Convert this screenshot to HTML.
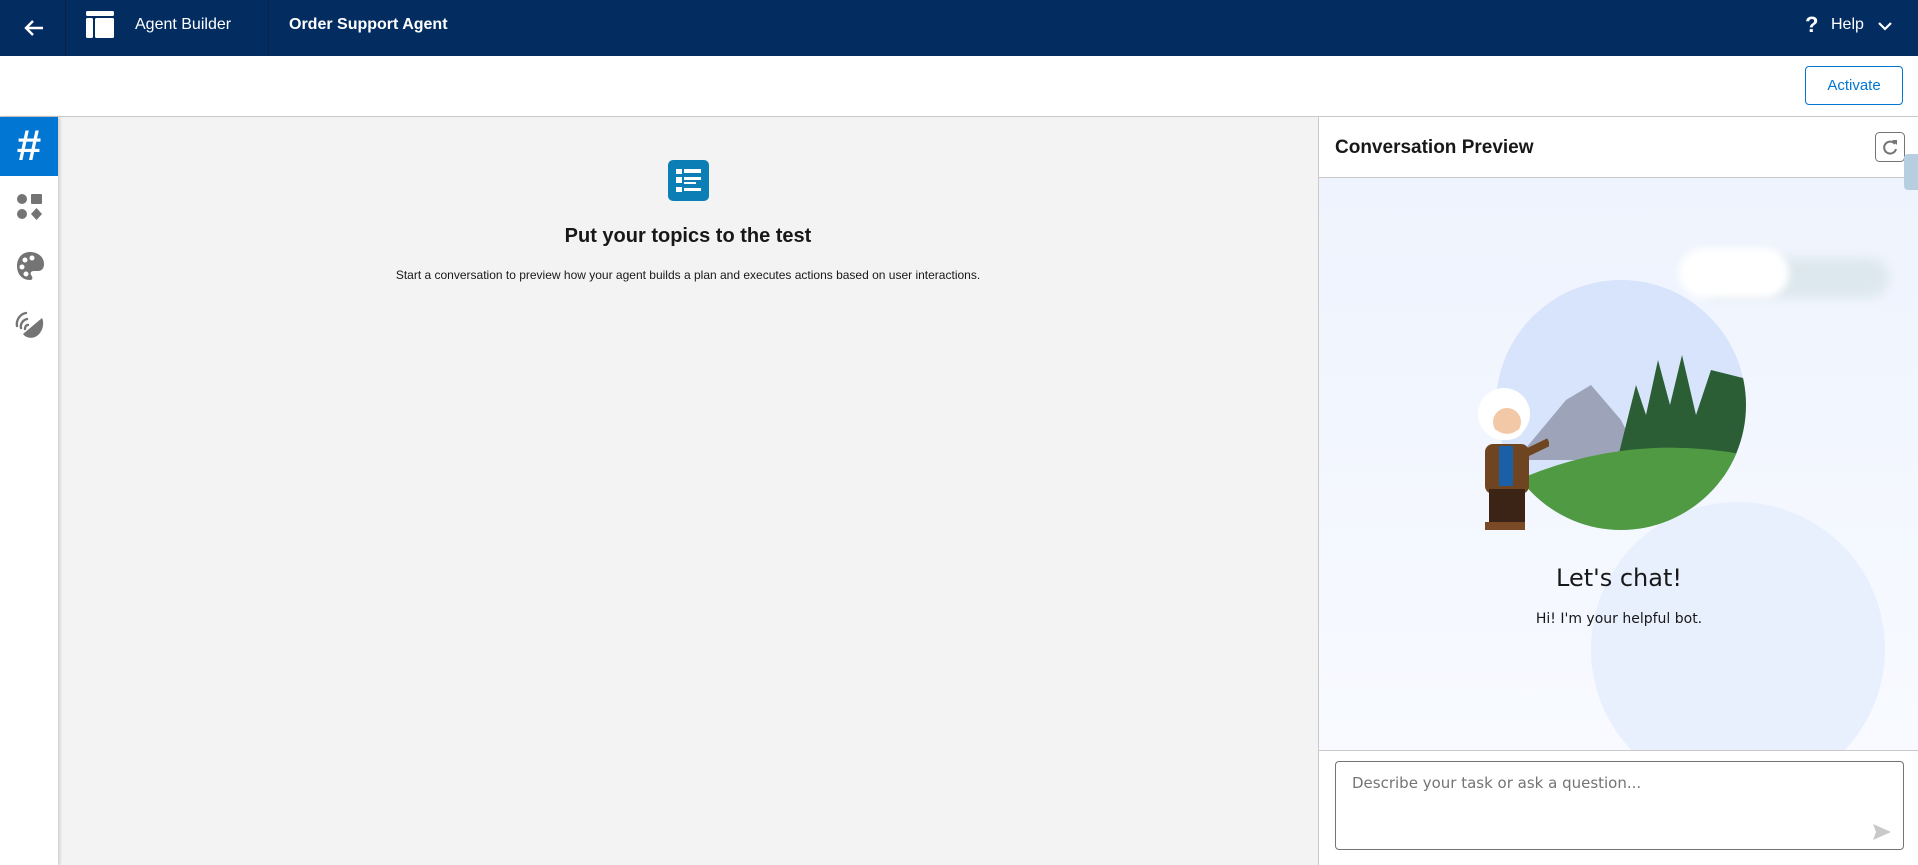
<!DOCTYPE html>
<html><head><meta charset="utf-8"><style>
*{box-sizing:border-box;margin:0;padding:0}
body{width:1918px;height:865px;overflow:hidden;font-family:"Liberation Sans",sans-serif;background:#f3f3f3;position:relative}
.hdr{position:absolute;left:0;top:0;width:1918px;height:56px;background:#032d60;color:#fff}
.div{position:absolute;top:0;width:1px;height:56px;background:#0b2246}
.bar{position:absolute;left:0;top:56px;width:1918px;height:61px;background:#fff;border-bottom:1px solid #c9c9c9}
.btn{position:absolute;left:1805px;top:66px;width:98px;height:39px;border:1px solid #0176d3;border-radius:4px;color:#0176d3;font-size:15px;text-align:center;line-height:37px;background:#fff}
.side{position:absolute;left:0;top:117px;width:58px;height:748px;background:#fff;box-shadow:2px 0 3px rgba(0,0,0,.15)}
.panel{position:absolute;left:1318px;top:117px;width:600px;height:748px;background:#fff;border-left:1px solid #c9c9c9}
.chat{position:absolute;left:0;top:60px;width:600px;height:573px;background:linear-gradient(#eef3fd,#f5f8ff 70%,#f8faff);overflow:hidden;border-top:1px solid #c9c9c9}
</style></head><body>
<div class="hdr">
 <svg style="position:absolute;left:23px;top:17px" width="22" height="22" viewBox="0 0 22 22"><path d="M20 11H4M10 4l-7 7 7 7" stroke="#fff" stroke-width="2.4" fill="none"/></svg>
 <div class="div" style="left:65px"></div>
 <svg style="position:absolute;left:86px;top:11px" width="28" height="27" viewBox="0 0 28 27"><rect x="0" y="0" width="28" height="5" rx="1.5" fill="#fff"/><rect x="0" y="7" width="7" height="20" rx="1.5" fill="#fff"/><rect x="9" y="7" width="19" height="20" rx="1.5" fill="#fff"/></svg>
 <div style="position:absolute;left:135px;top:16px;font-size:16px">Agent Builder</div>
 <div class="div" style="left:268px"></div>
 <div style="position:absolute;left:289px;top:16px;font-size:16px;font-weight:bold">Order Support Agent</div>
 <div style="position:absolute;left:1805px;top:12px;font-size:22px;font-weight:bold">?</div>
 <div style="position:absolute;left:1831px;top:16px;font-size:16px">Help</div>
 <svg style="position:absolute;left:1877px;top:20px" width="16" height="12" viewBox="0 0 16 12"><path d="M2 3l6 6 6-6" stroke="#fff" stroke-width="2.2" fill="none"/></svg>
</div>
<div class="bar"><div class="btn" style="top:10px">Activate</div></div>
<div class="side">
 <div style="position:absolute;left:0;top:0;width:58px;height:59px;background:#0176d3;color:#fff;font-size:44px;font-weight:bold;text-align:center;line-height:58px">#</div>
 <svg style="position:absolute;left:16px;top:76px" width="28" height="28" viewBox="0 0 28 28" fill="#747474"><circle cx="6" cy="6" r="5"/><rect x="15" y="1" width="11" height="10" rx="1"/><circle cx="6" cy="21" r="5"/><path d="M20.5 15l5.5 6-5.5 6-5.5-6z"/></svg>
 <svg style="position:absolute;left:16px;top:134px" width="28" height="30" viewBox="0 0 28 30"><path d="M14 1C6 1 1 7 1 15s5 14 13 14c3 0 3-3 1-5-1-2 0-4 3-4h4c4 0 6-3 6-7C28 6 22 1 14 1z" fill="#747474"/><circle cx="9" cy="9" r="2.5" fill="#fff"/><circle cx="16" cy="7" r="2.5" fill="#fff"/><circle cx="6" cy="16" r="2.5" fill="#fff"/><circle cx="10" cy="23" r="2.5" fill="#fff"/></svg>
 <svg style="position:absolute;left:14px;top:193px" width="30" height="30" viewBox="0 0 30 30"><path d="M28 8c3 6 0 16-7 19-5 2-10 0-12-3z" fill="#747474"/><path d="M3 16C2 10 6 4 12 3M7 18c-1-4 2-8 6-9M11 19c0-2 1-4 3-4" stroke="#747474" stroke-width="2.4" fill="none" stroke-linecap="round"/></svg>
</div>
<svg style="position:absolute;left:668px;top:160px" width="41" height="41" viewBox="0 0 41 41"><rect width="41" height="41" rx="5" fill="#0b7fb5"/><rect x="8" y="9" width="6" height="5" fill="#fff"/><rect x="16" y="9" width="17" height="4" fill="#fff"/><rect x="8" y="17" width="6" height="6" fill="#fff"/><rect x="16" y="17" width="17" height="3" fill="#fff"/><rect x="16" y="22" width="12" height="2" fill="#fff"/><rect x="8" y="27" width="6" height="5" fill="#fff"/><rect x="16" y="28" width="17" height="3" fill="#fff"/></svg>
<div style="position:absolute;left:58px;width:1260px;top:225px;text-align:center;font-size:20px;font-weight:bold;color:#181818">Put your topics to the test</div>
<div style="position:absolute;left:58px;width:1260px;top:268px;text-align:center;font-size:12px;color:#181818">Start a conversation to preview how your agent builds a plan and executes actions based on user interactions.</div>
<div class="panel">
 <div style="position:absolute;left:16px;top:20px;font-size:19px;font-weight:bold;color:#181818">Conversation Preview</div>
 <svg style="position:absolute;left:556px;top:15px" width="30" height="30" viewBox="0 0 30 30"><rect x=".5" y=".5" width="29" height="29" rx="4" fill="#fff" stroke="#747474"/><path d="M20 12a6 6 0 1 0 1 5" stroke="#747474" stroke-width="2" fill="none"/><path d="M17 8h5v5z" fill="#747474"/></svg>
 <div class="chat">
  <div style="position:absolute;left:272px;top:324px;width:294px;height:294px;border-radius:50%;background:#e8effd"></div>
  <div style="position:absolute;left:380px;top:80px;width:190px;height:40px;border-radius:30px;background:#dde8ee;filter:blur(5px)"></div>
  <div style="position:absolute;left:360px;top:70px;width:110px;height:50px;border-radius:30px;background:#fff;filter:blur(4px)"></div>
  <svg style="position:absolute;left:177px;top:102px" width="250" height="250" viewBox="0 0 250 250"><defs><clipPath id="c"><circle cx="125" cy="125" r="125"/></clipPath></defs><g clip-path="url(#c)"><rect width="250" height="250" fill="#d8e4fb"/><path d="M20 180L70 120 95 105 125 140 145 180z" fill="#9da3b8"/><path d="M120 185l20-80 10 30 12-55 12 45 12-50 14 60 15-45 40 10v100z" fill="#2c5e35"/><path d="M0 210Q120 150 250 175V250H0z" fill="#4f9a42"/></g></svg>
  <svg style="position:absolute;left:150px;top:206px" width="80" height="152" viewBox="0 0 80 152"><circle cx="35" cy="30" r="26" fill="#fff"/><circle cx="38" cy="38" r="14" fill="#f3c8a7"/><path d="M25 48q13 10 26 0" stroke="#fff" stroke-width="6" fill="none"/><rect x="16" y="60" width="44" height="50" rx="8" fill="#6e4520"/><rect x="30" y="62" width="14" height="40" fill="#1b5fa6"/><path d="M55 70l25-12" stroke="#6e4520" stroke-width="8"/><rect x="20" y="105" width="36" height="35" fill="#3b2415"/><rect x="16" y="138" width="40" height="8" fill="#7a4a26"/></svg>
  <div style="position:absolute;left:0;width:600px;top:386px;text-align:center;font-size:24px;color:#181818;font-family:'DejaVu Sans',sans-serif">Let's chat!</div>
  <div style="position:absolute;left:0;width:600px;top:433px;text-align:center;font-size:14px;color:#181818;font-family:'DejaVu Sans',sans-serif">Hi! I'm your helpful bot.</div>
 </div>
 <div style="position:absolute;left:0;top:633px;width:600px;height:1px;background:#c9c9c9"></div>
 <div style="position:absolute;left:16px;top:644px;width:569px;height:89px;border:1px solid #747474;border-radius:4px;background:#fff">
  <div style="position:absolute;left:16px;top:12px;font-size:15px;color:#747474;font-family:'DejaVu Sans',sans-serif">Describe your task or ask a question...</div>
  <svg style="position:absolute;left:537px;top:62px" width="18" height="16" viewBox="0 0 18 16"><path d="M0 0l18 8-18 8 3-8z" fill="#c9c9c9"/></svg>
 </div>
</div>
<div style="position:absolute;left:1904px;top:154px;width:14px;height:36px;background:#b7cde0;border-radius:4px 0 0 4px"></div>
</body></html>
